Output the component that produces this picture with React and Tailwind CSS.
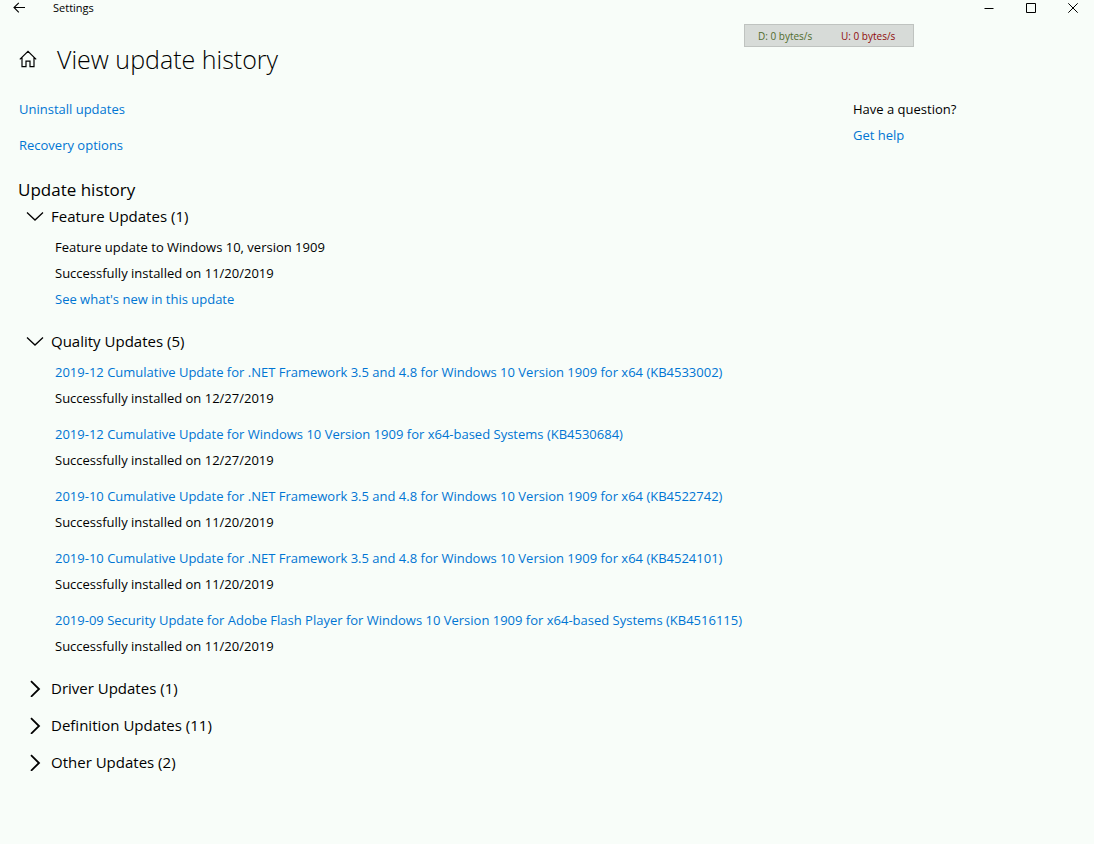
import React, { useState } from 'react';

const groups = [
  {
    title: 'Feature Updates',
    count: 1,
    open: true,
    items: [
      {
        name: 'Feature update to Windows 10, version 1909',
        date: '11/20/2019',
        more: "See what's new in this update",
      },
    ],
  },
  {
    title: 'Quality Updates',
    count: 5,
    open: true,
    items: [
      {
        name: '2019-12 Cumulative Update for .NET Framework 3.5 and 4.8 for Windows 10 Version 1909 for x64 (KB4533002)',
        date: '12/27/2019',
        link: true,
      },
      {
        name: '2019-12 Cumulative Update for Windows 10 Version 1909 for x64-based Systems (KB4530684)',
        date: '12/27/2019',
        link: true,
      },
      {
        name: '2019-10 Cumulative Update for .NET Framework 3.5 and 4.8 for Windows 10 Version 1909 for x64 (KB4522742)',
        date: '11/20/2019',
        link: true,
      },
      {
        name: '2019-10 Cumulative Update for .NET Framework 3.5 and 4.8 for Windows 10 Version 1909 for x64 (KB4524101)',
        date: '11/20/2019',
        link: true,
      },
      {
        name: '2019-09 Security Update for Adobe Flash Player for Windows 10 Version 1909 for x64-based Systems (KB4516115)',
        date: '11/20/2019',
        link: true,
      },
    ],
  },
  { title: 'Driver Updates', count: 1, open: false, items: [] },
  { title: 'Definition Updates', count: 11, open: false, items: [] },
  { title: 'Other Updates', count: 2, open: false, items: [] },
];

const Link = ({ children }) => (
  <a href="#" className="text-[#0075d3] hover:text-gray-500">
    {children}
  </a>
);

const Chevron = ({ open }) => (
  <svg
    width="18"
    height="18"
    viewBox="0 0 18 18"
    fill="none"
    stroke="currentColor"
    strokeWidth={open ? 1.3 : 1.8}
    aria-hidden="true"
  >
    {open ? <path d="M1 5.5l8 7.5 8-7.5" /> : <path d="M5 2.2l8 7.8-8 7.8" />}
  </svg>
);

const TitleBar = () => (
  <header className="flex h-4 items-center">
    <button type="button" aria-label="Back" className="ml-[13px] flex h-4 w-3 items-center">
      <svg width="12" height="12" viewBox="0 0 12 12" fill="none" stroke="currentColor" strokeWidth="1.1">
        <path d="M.8 5.5H12M5.8.8L1 5.5l4.8 4.8" />
      </svg>
    </button>
    <span className="ml-7 text-[11px] leading-4">Settings</span>
    <div className="ml-auto flex">
      <button type="button" aria-label="Minimize" className="flex h-4 w-[42px] items-center justify-center">
        <svg width="10" height="10" viewBox="0 0 10 10" stroke="currentColor">
          <path d="M.5 5.5h9" />
        </svg>
      </button>
      <button type="button" aria-label="Maximize" className="flex h-4 w-[42px] items-center justify-center">
        <svg width="10" height="10" viewBox="0 0 10 10" fill="none" stroke="currentColor">
          <path d="M.5.5h9v9h-9z" />
        </svg>
      </button>
      <button type="button" aria-label="Close" className="flex h-4 w-[42px] items-center justify-center">
        <svg width="10" height="10" viewBox="0 0 10 10" stroke="currentColor">
          <path d="M.3.3l9.4 9.4M9.7.3L.3 9.7" />
        </svg>
      </button>
    </div>
  </header>
);

// Floating network meter that sits over the window
const NetMeter = () => (
  <div className="absolute top-6 right-[180px] flex h-[23px] w-[170px] items-center border border-[#bfc3c0] bg-[#d7dbd8] pl-[13px] text-[10px]">
    <span className="w-[83px] text-[#4f6b2c]">D: 0 bytes/s</span>
    <span className="text-[#8f0a0a]">U: 0 bytes/s</span>
  </div>
);

const UpdateGroup = ({ group }) => {
  const [open, setOpen] = useState(group.open);

  return (
    <section className="mb-[7px]">
      <h3>
        <button
          type="button"
          aria-expanded={open}
          onClick={() => setOpen(!open)}
          className="flex h-[30px] items-center gap-[7px] pl-2 text-[15px]"
        >
          <Chevron open={open} />
          {group.title} ({group.count})
        </button>
      </h3>
      {open && (
        <ul className="flex flex-col gap-[10px] pt-[3px] pb-[7px] pl-[37px]">
          {group.items.map((item) => (
            <li key={item.name}>
              <p>{item.link ? <Link>{item.name}</Link> : item.name}</p>
              <p>Successfully installed on {item.date}</p>
              {item.more && (
                <p>
                  <Link>{item.more}</Link>
                </p>
              )}
            </li>
          ))}
        </ul>
      )}
    </section>
  );
};

const App = () => {
  return (
    <div className="relative min-h-screen bg-[#f8fdf9] font-['Open_Sans',sans-serif] text-[13px] leading-[26px] text-black">
      <TitleBar />
      <NetMeter />

      <div className="flex h-20 items-center gap-5 pt-[6px] pl-[19px]">
        <button type="button" aria-label="Home">
          <svg width="18" height="18" viewBox="0 0 18 18" fill="none" stroke="currentColor" strokeWidth="1.2">
            <path d="M.8 9.4L9 1.4l8.2 8M3 7.6v9h4v-5.4h4v5.4h4v-9" />
          </svg>
        </button>
        <h1 className="text-[25px] leading-8 font-light">View update history</h1>
      </div>

      <div className="flex">
        <main className="min-w-0 flex-1 pl-[18px]">
          <nav className="flex flex-col gap-[10px] pl-px">
            <Link>Uninstall updates</Link>
            <Link>Recovery options</Link>
          </nav>
          <h2 className="mt-[21px] text-[17px] leading-[22px]">Update history</h2>
          {groups.map((group) => (
            <UpdateGroup key={group.title} group={group} />
          ))}
        </main>

        <aside className="w-[241px] shrink-0">
          <p>Have a question?</p>
          <p>
            <Link>Get help</Link>
          </p>
        </aside>
      </div>
    </div>
  );
};

export default App;
